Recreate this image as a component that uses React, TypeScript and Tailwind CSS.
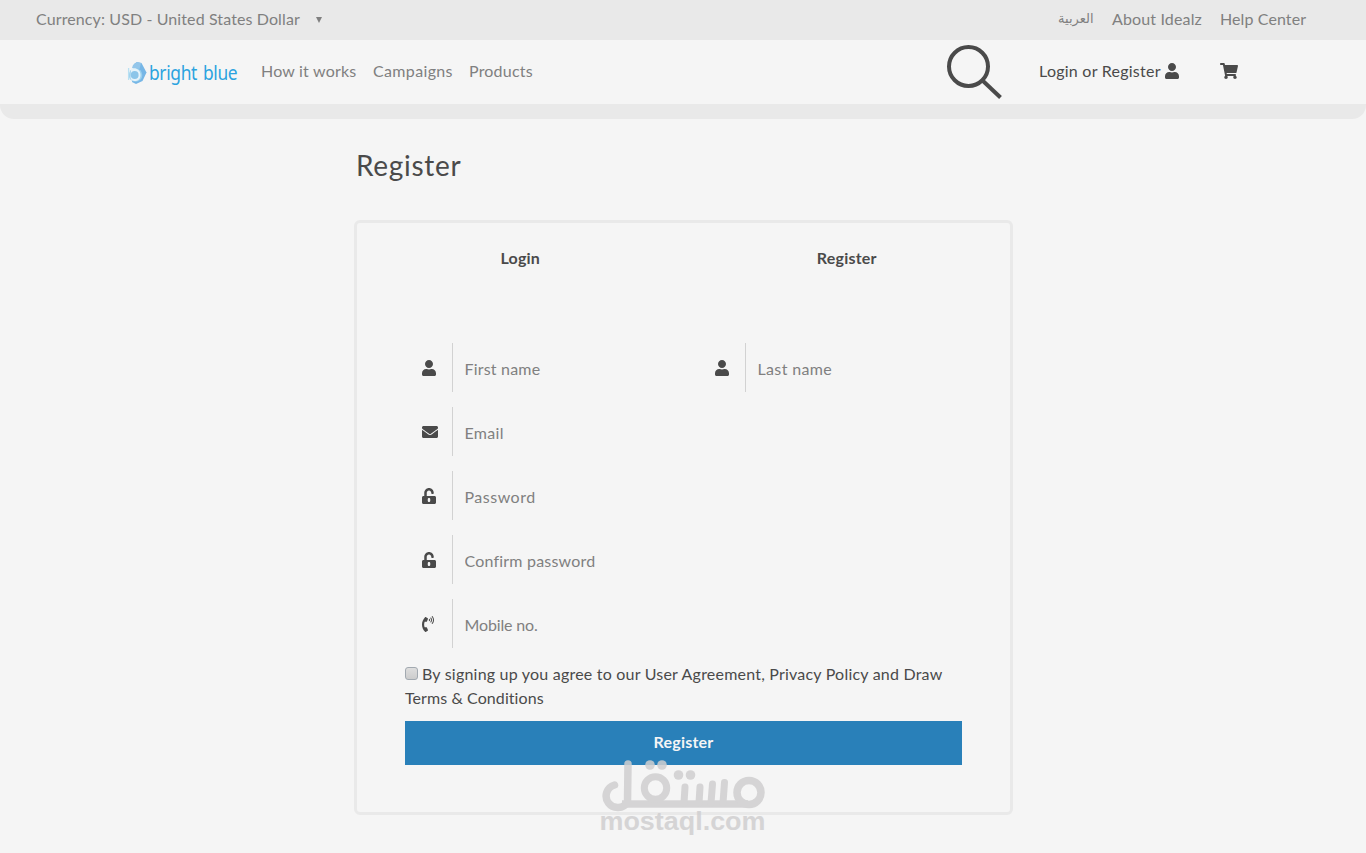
import React from "react";
import { FaEnvelope, FaPhoneVolume, FaShoppingCart, FaUnlockAlt, FaUser } from "react-icons/fa";

interface FieldProps {
  icon: React.ReactNode;
  label: string;
  type?: string;
  tracking: string;
}

function Field({ icon, label, type = "text", tracking }: FieldProps) {
  return (
    <div className="flex h-[49px] w-full">
      <div className="flex w-12 shrink-0 items-center border-r border-[#d2d2d2] pl-[16.5px]">{icon}</div>
      <input
        type={type}
        placeholder={label}
        className={`w-full min-w-0 bg-transparent pl-[11.5px] pt-[3px] outline-none placeholder:text-[#808080] ${tracking}`}
      />
    </div>
  );
}

function BrandLogo() {
  return (
    <a href="#" className="mt-[3px] flex h-6 w-[134px] items-center text-[#2ba3df]">
      <svg width="20" height="24" viewBox="0 0 20 24">
        <path d="M7 3 L10 1 L14.500 2 L19.500 11.500 L15.500 20 L9 23 L5 21 Z" fill="#76b6e6" />
        <path d="M6 4 L10 1 L14 2 L12.500 8 L5 7 Z" fill="#94c6ea" />
        <circle cx="8.500" cy="14" r="6.800" fill="#9bd0ee" />
        <path d="M4 8 C8 6 13.500 8.500 13.500 14 C13.500 18 11 20 7.500 20 C5.500 20 4 19 3.500 17 Z" fill="#e6f3fa" />
        <circle cx="7.700" cy="14" r="3.900" fill="#8cc5e9" />
        <path d="M1.600 7 V19" stroke="#b9e0f2" strokeWidth="1.300" />
      </svg>
      <span className="ml-[2px] inline-block origin-left scale-x-[0.87] whitespace-nowrap font-['Noto_Sans'] text-[20px] leading-6 tracking-[-0.4px] [word-spacing:2px]">
        bright blue
      </span>
    </a>
  );
}

function Watermark() {
  return (
    <div className="pointer-events-none absolute left-[598px] top-[756px] opacity-85">
      <svg width="170" height="82" viewBox="0 0 170 82" fill="none" stroke="#d0cfd0">
        <path d="M16.500 29 A11.500 11.500 0 1 0 29.500 46 L30 8" strokeWidth="7.500" strokeLinecap="round" />
        <path d="M24 48 H150" strokeWidth="7.500" />
        <circle cx="57.500" cy="32" r="11.200" strokeWidth="7" />
        <circle cx="151" cy="36.500" r="12" strokeWidth="7.500" />
        <path d="M86 47 L87 31 M101 47 L102 31 M113 47 L114.500 28 M125 47 L126.500 26.500" strokeWidth="7" strokeLinecap="round" />
        <g fill="#d0cfd0" stroke="none">
          <circle cx="52" cy="9" r="4.800" />
          <circle cx="64" cy="9" r="4.800" />
          <circle cx="80.500" cy="19" r="4.800" />
          <circle cx="92.500" cy="19" r="4.800" />
          <text
            x="1.500"
            y="74"
            textLength="166"
            lengthAdjust="spacingAndGlyphs"
            fontFamily="Liberation Sans, sans-serif"
            fontWeight="700"
            fontSize="26"
          >
            mostaql.com
          </text>
        </g>
      </svg>
    </div>
  );
}

export default function App() {
  return (
    <div className="relative h-[853px] w-[1366px] overflow-hidden bg-[#f5f5f5] font-[Lato,sans-serif] text-base text-[#4a4a4a]">
      {/* Top bar */}
      <div className="flex h-10 items-center justify-between bg-[#e9e9e9] pb-0.5 pl-9 pr-[60px] text-[#808080]">
        <div className="flex items-center">
          <span className="w-[279px] whitespace-nowrap tracking-[0.11px]">Currency: USD - United States Dollar</span>
          <svg width="8" height="6" viewBox="0 0 8 6" fill="#808080" className="mt-0.5">
            <path d="M1 0 H7 L4 6 Z" />
          </svg>
        </div>
        <div className="flex items-center whitespace-nowrap">
          <a href="#" className="w-[54px] font-['DejaVu_Sans'] text-[13px]">العربية</a>
          <a href="#" className="w-[108px] tracking-[0.15px]">About Idealz</a>
          <a href="#" className="w-[86px] tracking-[0.1px]">Help Center</a>
        </div>
      </div>

      {/* Main navigation */}
      <header className="flex h-16 items-center justify-between pb-0.5 pl-[127px] pr-32">
        <nav className="flex items-center whitespace-nowrap text-[#808080]">
          <BrandLogo />
          <a href="#" className="w-28 tracking-[0.2px]">How it works</a>
          <a href="#" className="w-24 tracking-[0.35px]">Campaigns</a>
          <a href="#" className="tracking-[0.2px]">Products</a>
        </nav>
        <div className="flex items-center whitespace-nowrap">
          <svg width="57" height="56" viewBox="0 0 57 56" fill="none" stroke="#4a4a4a" strokeWidth="4" className="mr-[37px] mt-[2px]">
            <circle cx="23.500" cy="22.500" r="19.500" />
            <path d="M37.500 36.500 L55.500 53.500" />
          </svg>
          <a href="#" className="flex w-[181px] items-center">
            <span className="w-[126px] tracking-[0.25px]">Login or Register</span>
            <FaUser className="h-4 w-[14px]" />
          </a>
          <FaShoppingCart className="h-4 w-[18px]" />
        </div>
      </header>
      <div className="h-[15px] rounded-b-[14px] bg-[#e9e9e9]" />

      {/* Register card */}
      <main className="ml-[354px] w-[659px]">
        <h1 className="ml-[2px] mt-7 h-[73px] text-[28px] leading-9 tracking-[0.7px]">Register</h1>
        <section className="h-[595px] rounded-md border-[3px] border-[#e9e9e9] px-12 pt-[22px]">
          <div className="-mx-12 flex h-[98px] text-center font-bold">
            <a href="#" className="flex-1 leading-[26px] tracking-[0.2px]">Login</a>
            <a href="#" className="flex-1 leading-[26px] tracking-[0.2px]">Register</a>
          </div>
          <form>
            <div className="flex flex-col gap-[15px]">
              <div className="flex gap-[29px]">
                <Field icon={<FaUser className="h-4 w-[14px]" />} label="First name" tracking="tracking-[0.2px]" />
                <Field icon={<FaUser className="h-4 w-[14px]" />} label="Last name" tracking="tracking-[0.35px]" />
              </div>
              <Field icon={<FaEnvelope className="h-4 w-4" />} label="Email" type="email" tracking="tracking-[0.3px]" />
              <Field icon={<FaUnlockAlt className="h-4 w-[14px]" />} label="Password" type="password" tracking="tracking-[0.5px]" />
              <Field icon={<FaUnlockAlt className="h-4 w-[14px]" />} label="Confirm password" type="password" tracking="tracking-[0.2px]" />
              <Field icon={<FaPhoneVolume className="h-4 w-3" />} label="Mobile no." type="tel" tracking="tracking-[-0.15px]" />
            </div>
            <div className="mt-[14px] h-[59px] whitespace-nowrap leading-6 tracking-[0.21px]">
              <label>
                <input
                  type="checkbox"
                  className="mr-1 h-[13px] w-[13px] appearance-none rounded-[3px] border border-[#a2a9b0] bg-linear-to-b from-[#dedede] to-[#cccccc]"
                />
                By signing up you agree to our User Agreement, Privacy Policy and Draw
              </label>
              <br />
              <span className="tracking-[0.08px]">Terms &amp; Conditions</span>
            </div>
            <button type="button" className="h-11 w-full bg-[#2980b9] pb-0.5 font-bold tracking-[0.2px] text-[#f5f5f5]">
              Register
            </button>
          </form>
        </section>
      </main>
      <Watermark />
    </div>
  );
}
